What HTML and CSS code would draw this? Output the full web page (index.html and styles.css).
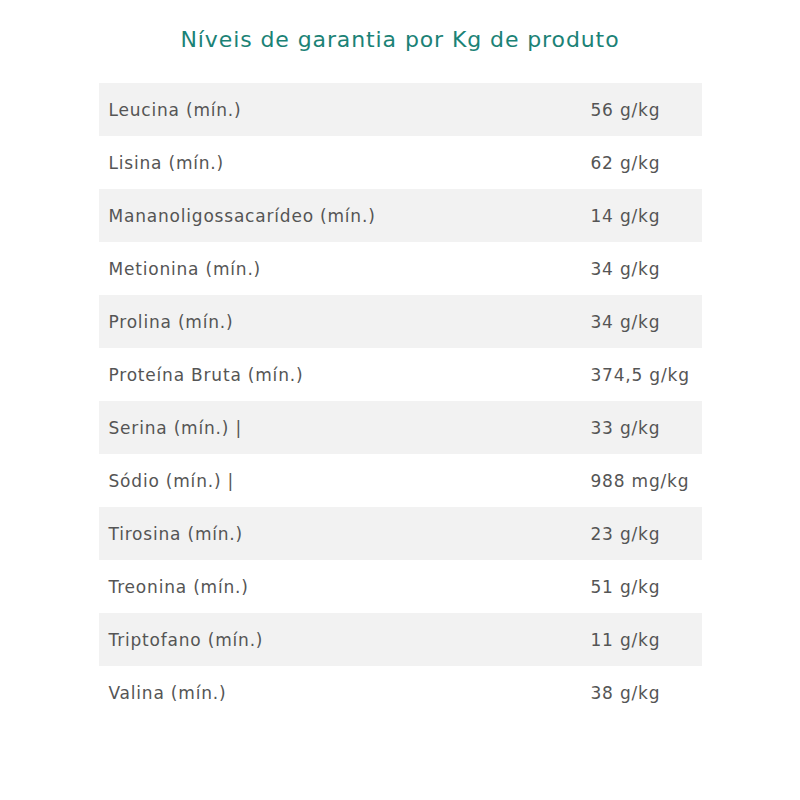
FILE: index.html
```html
<!DOCTYPE html>
<html lang="pt">
<head>
<meta charset="utf-8">
<link rel="stylesheet" href="styles.css">
</head>
<body>
<div class="page">
  <h2 class="title">Níveis de garantia por Kg de produto</h2>
  <table class="levels">
    <tr><td class="name">Leucina (mín.)</td><td class="val">56 g/kg</td></tr>
    <tr><td class="name">Lisina (mín.)</td><td class="val">62 g/kg</td></tr>
    <tr><td class="name">Mananoligossacarídeo (mín.)</td><td class="val">14 g/kg</td></tr>
    <tr><td class="name">Metionina (mín.)</td><td class="val">34 g/kg</td></tr>
    <tr><td class="name">Prolina (mín.)</td><td class="val">34 g/kg</td></tr>
    <tr><td class="name">Proteína Bruta (mín.)</td><td class="val">374,5 g/kg</td></tr>
    <tr><td class="name">Serina (mín.) |</td><td class="val">33 g/kg</td></tr>
    <tr><td class="name">Sódio (mín.) |</td><td class="val">988 mg/kg</td></tr>
    <tr><td class="name">Tirosina (mín.)</td><td class="val">23 g/kg</td></tr>
    <tr><td class="name">Treonina (mín.)</td><td class="val">51 g/kg</td></tr>
    <tr><td class="name">Triptofano (mín.)</td><td class="val">11 g/kg</td></tr>
    <tr><td class="name">Valina (mín.)</td><td class="val">38 g/kg</td></tr>
  </table>
</div>
</body>
</html>
```

FILE: styles.css
```css
html, body {
  margin: 0;
  padding: 0;
  background: #ffffff;
}
.page {
  width: 800px;
  display: flex;
  flex-direction: column;
  align-items: center;
  padding-top: 24px;
  font-family: "DejaVu Sans", "Open Sans", sans-serif;
}
.title {
  margin: 0 0 27px 0;
  font-size: 22px;
  font-weight: 400;
  line-height: 32px;
  letter-spacing: 0.9px;
  color: #1b8276;
}
.levels {
  width: 603px;
  border-collapse: collapse;
  color: #555555;
  font-size: 17px;
  letter-spacing: 0.8px;
}
.levels tr {
  height: 53px;
}
.levels tr:nth-child(odd) {
  background: #f2f2f2;
}
.levels td {
  padding: 0 10px;
  vertical-align: middle;
}
.levels .name {
  width: 462px;
}
```
